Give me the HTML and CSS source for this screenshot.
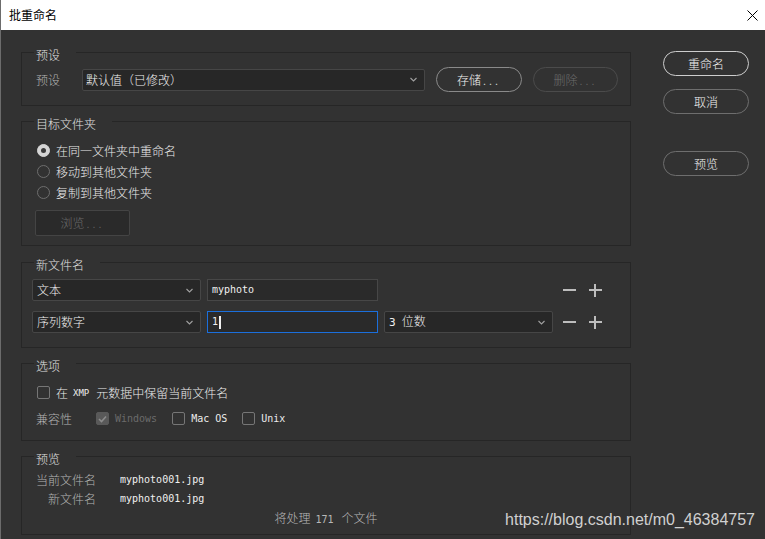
FILE: index.html
```html
<!DOCTYPE html>
<html lang="zh-CN">
<head>
<meta charset="utf-8">
<title>批重命名</title>
<link rel="stylesheet" href="styles.css">
</head>
<body>
<div class="window">
  <header class="titlebar">
    <span class="title">批重命名</span>
    <svg class="close" width="11" height="11" viewBox="0 0 11 11"><path d="M0.5 0.5L10.5 10.5M10.5 0.5L0.5 10.5" fill="none" stroke="#000" stroke-width="1"/></svg>
  </header>
  <div class="dialog">
    <div class="main">
      <fieldset class="group">
        <legend>预设</legend>
        <div class="preset-row">
          <span class="field-label">预设</span>
          <div class="select wide"><span>默认值（已修改）</span><svg class="chev" width="7" height="5" viewBox="0 0 7 5"><path d="M0.5 1L3.5 4L6.5 1" fill="none" stroke="#a0a0a0" stroke-width="1.1"/></svg></div>
          <button class="pill save">存储<span class="dots">...</span></button>
          <button class="pill delete disabled">删除<span class="dots">...</span></button>
        </div>
      </fieldset>

      <fieldset class="group">
        <legend>目标文件夹</legend>
        <div class="target-body">
          <div class="option-row"><span class="radio checked"></span>在同一文件夹中重命名</div>
          <div class="option-row"><span class="radio"></span>移动到其他文件夹</div>
          <div class="option-row"><span class="radio"></span>复制到其他文件夹</div>
          <div class="browse">浏览<span class="dots">...</span></div>
        </div>
      </fieldset>

      <fieldset class="group naming">
        <legend>新文件名</legend>
        <div class="naming-grid">
          <div class="select"><span>文本</span><svg class="chev" width="7" height="5" viewBox="0 0 7 5"><path d="M0.5 1L3.5 4L6.5 1" fill="none" stroke="#a0a0a0" stroke-width="1.1"/></svg></div>
          <div class="input">myphoto</div>
          <svg class="minus" width="13" height="13" viewBox="0 0 13 13"><rect x="0" y="5" width="13" height="2" fill="#bdbdbd"/></svg>
          <svg class="plus" width="13" height="13" viewBox="0 0 13 13"><rect x="0" y="5" width="13" height="2" fill="#bdbdbd"/><rect x="5" y="0" width="2" height="13" fill="#bdbdbd"/></svg>

          <div class="select"><span>序列数字</span><svg class="chev" width="7" height="5" viewBox="0 0 7 5"><path d="M0.5 1L3.5 4L6.5 1" fill="none" stroke="#a0a0a0" stroke-width="1.1"/></svg></div>
          <div class="input focused">1<span class="caret"></span></div>
          <div class="select"><span><span class="digit">3</span>位数</span><svg class="chev" width="7" height="5" viewBox="0 0 7 5"><path d="M0.5 1L3.5 4L6.5 1" fill="none" stroke="#a0a0a0" stroke-width="1.1"/></svg></div>
          <svg class="minus" width="13" height="13" viewBox="0 0 13 13"><rect x="0" y="5" width="13" height="2" fill="#bdbdbd"/></svg>
          <svg class="plus" width="13" height="13" viewBox="0 0 13 13"><rect x="0" y="5" width="13" height="2" fill="#bdbdbd"/><rect x="5" y="0" width="2" height="13" fill="#bdbdbd"/></svg>
        </div>
      </fieldset>

      <fieldset class="group">
        <legend>选项</legend>
        <div class="options-body">
          <div class="check-row"><span class="checkbox lead"></span>在<span class="xmp">XMP</span>元数据中保留当前文件名</div>
          <div class="check-row">
            <span class="compat-label">兼容性</span>
            <span class="checkbox checked-disabled"><svg width="9" height="8" viewBox="0 0 9 8"><path d="M1 4L3.5 6.5L8 1.5" fill="none" stroke="#8c8c8c" stroke-width="1.6"/></svg></span>
            <span class="mono compat-item disabled-text">Windows</span>
            <span class="checkbox"></span>
            <span class="mono compat-item">Mac OS</span>
            <span class="checkbox"></span>
            <span class="mono">Unix</span>
          </div>
        </div>
      </fieldset>

      <fieldset class="group">
        <legend>预览</legend>
        <div class="preview-body">
          <div class="preview-row"><span class="preview-label">当前文件名</span><span class="mono">myphoto001.jpg</span></div>
          <div class="preview-row"><span class="preview-label">新文件名</span><span class="mono">myphoto001.jpg</span></div>
          <div class="summary">将处理<span class="count">171</span>个文件</div>
        </div>
      </fieldset>
    </div>

    <div class="actions">
      <button class="pill primary">重命名</button>
      <button class="pill secondary">取消</button>
      <button class="pill secondary preview-btn">预览</button>
    </div>
  </div>
  <div class="watermark">https://blog.csdn.net/m0_46384757</div>
</div>
</body>
</html>
```

FILE: styles.css
```css
* { box-sizing: border-box; }
html, body { margin: 0; padding: 0; }
body {
  width: 765px;
  height: 539px;
  overflow: hidden;
  background: #323232;
  font-family: "Noto Sans CJK SC", "Noto Sans", sans-serif;
  font-size: 12px;
  font-weight: 300;
  line-height: 16px;
  color: #ececec;
}
.window {
  position: relative;
  height: 539px;
  border-left: 1px solid #6c6c6c;
}
.titlebar {
  height: 30px;
  background: #fff;
  display: flex;
  align-items: center;
  justify-content: space-between;
  padding: 0 7px 0 8px;
}
.title { color: #000; font-size: 12px; font-weight: 400; }
.close { display: block; }

.dialog { display: flex; padding: 11px 0 0 20px; }
.main { width: 610px; flex: none; }
.actions {
  flex: none;
  width: 86px;
  margin-left: 32px;
  padding-top: 10px;
  display: flex;
  flex-direction: column;
  gap: 13px;
}
.actions .preview-btn { margin-top: 24px; }

.group {
  margin: 4px 0 0;
  padding: 0;
  border: 1px solid #262626;
  min-width: 0;
}
.group:first-child { margin-top: 0; }
.group.naming { margin-top: 5px; }
.group legend {
  margin-left: 12px;
  padding: 6px 16px 0 2px;
  line-height: 16px;
  color: #e0e0e0;
}

.pill {
  height: 25px;
  border: 1px solid #8a8a8a;
  border-radius: 13px;
  background: transparent;
  color: #f2f2f2;
  font: inherit;
  padding: 0;
  display: flex;
  align-items: center;
  justify-content: center;
}
.pill.primary { border-color: #cdcdcd; }
.pill.secondary { border-color: #6e6e6e; }
.pill.disabled { border-color: #4b4b4b; color: #6c6c6c; }
.dots { letter-spacing: 3px; margin-left: 2px; }

.preset-row {
  box-sizing: content-box;
  display: flex;
  align-items: center;
  height: 25px;
  padding: 4px 0 13px 14px;
}
.field-label { width: 46px; color: #b2b2b2; flex: none; }
.select {
  display: flex;
  align-items: center;
  justify-content: space-between;
  height: 22px;
  background: #272727;
  border: 1px solid #464646;
  border-radius: 2px;
  padding: 0 7px 0 3px;
  color: #f0f0f0;
}
.select.wide { width: 343px; margin-right: 11px; flex: none; }
.chev { display: block; flex: none; }
.pill.save { width: 86px; margin-right: 11px; }
.pill.delete { width: 85px; }

.target-body { padding: 8px 0 9px 13px; }
.option-row { display: flex; align-items: center; height: 21px; }
.radio {
  width: 13px;
  height: 13px;
  margin: 0 6px 0 2px;
  border-radius: 50%;
  border: 1px solid #6e6e6e;
  display: flex;
  align-items: center;
  justify-content: center;
  flex: none;
}
.radio.checked { background: #d5d5d5; border-color: #d5d5d5; }
.radio.checked::after {
  content: "";
  width: 5px;
  height: 5px;
  border-radius: 50%;
  background: #3a3a3a;
}
.browse {
  width: 95px;
  height: 26px;
  margin-top: 7px;
  background: #2a2a2a;
  border: 1px solid #444;
  border-radius: 2px;
  display: flex;
  align-items: center;
  justify-content: center;
  color: #6a6a6a;
}

.naming-grid {
  display: grid;
  grid-template-columns: 169px 171px 169px 17px 20px;
  grid-auto-rows: 22px;
  column-gap: 6px;
  row-gap: 10px;
  padding: 6px 0 14px 10px;
}
.naming-grid .select { padding-left: 4px; }
.digit {
  font-family: "DejaVu Sans Mono", monospace;
  font-size: 11px;
  margin-right: 6px;
}
.input {
  height: 22px;
  background: #2a2a2a;
  border: 1px solid #474747;
  display: flex;
  align-items: center;
  padding: 0 4px;
  font-family: "DejaVu Sans Mono", monospace;
  font-size: 10px;
  font-weight: 400;
  color: #f0f0f0;
}
.input.focused { border-color: #1b6fdc; }
.caret { width: 2px; height: 13px; background: #f0f0f0; margin-left: 1px; }
.minus { grid-column: 4; align-self: center; justify-self: end; display: block; }
.plus { grid-column: 5; align-self: center; justify-self: end; display: block; }

.options-body {
  padding: 8px 0 11px 14px;
  display: flex;
  flex-direction: column;
  gap: 5px;
}
.check-row { display: flex; align-items: center; height: 21px; }
.checkbox {
  width: 13px;
  height: 13px;
  border: 1px solid #767676;
  border-radius: 2px;
  flex: none;
  margin-right: 6px;
}
.checkbox.lead { margin-left: 1px; }
.checkbox.checked-disabled {
  background: #595959;
  border-color: #595959;
  display: flex;
  align-items: center;
  justify-content: center;
}
.checkbox.checked-disabled svg { display: block; }
.xmp {
  font-family: "DejaVu Sans Mono", monospace;
  font-size: 9px;
  margin: 0 7px 0 5px;
}
.compat-label { width: 60px; color: #b2b2b2; flex: none; }
.mono { font-family: "DejaVu Sans Mono", monospace; font-size: 10px; font-weight: 400; }
.compat-item { margin-right: 15px; }
.disabled-text { color: #6b6b6b; }

.preview-body { padding: 3px 0 7px 14px; }
.preview-row { display: flex; align-items: center; height: 19px; }
.preview-label { width: 60px; text-align: right; color: #b2b2b2; margin-right: 24px; flex: none; }
.preview-row .mono { color: #f0f0f0; }
.summary {
  height: 19px;
  line-height: 19px;
  text-align: center;
  color: #b8b8b8;
  padding-right: 14px;
}
.count {
  font-family: "DejaVu Sans Mono", monospace;
  font-size: 10px;
  margin: 0 8px 0 5px;
}

.watermark {
  position: absolute;
  right: 10px;
  bottom: 10px;
  font-family: "Liberation Sans", Arial, sans-serif;
  font-size: 16px;
  line-height: 18px;
  color: #d0d0d0;
}
```
